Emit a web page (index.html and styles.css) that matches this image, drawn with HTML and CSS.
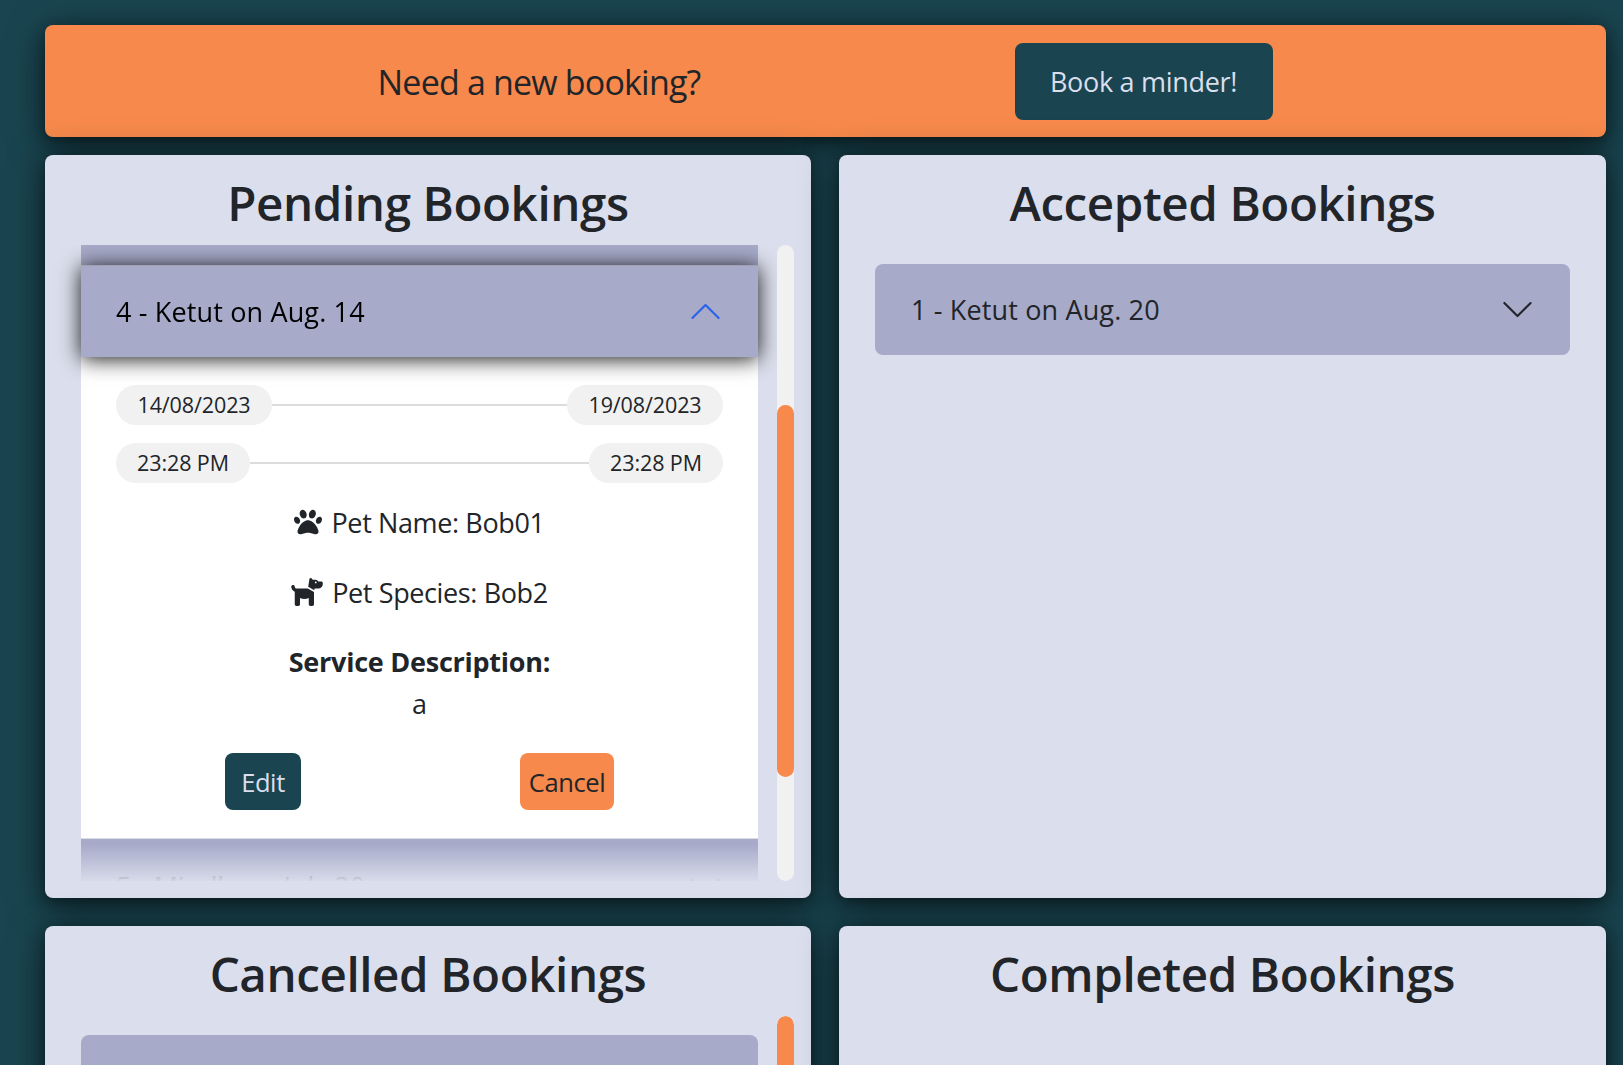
FILE: index.html
```html
<!DOCTYPE html>
<html lang="en">
<head>
<meta charset="utf-8">
<title>Bookings</title>
<link rel="stylesheet" href="styles.css">
</head>
<body>
<main class="page">
  <section class="banner">
    <div class="banner-half"><p class="banner-text">Need a new booking?</p></div>
    <div class="banner-half"><button class="btn-book"><span>Book a minder!</span></button></div>
  </section>
  <div class="grid">
    <section class="panel">
      <h2 class="title">Pending Bookings</h2>
      <div class="scroll">
        <div class="viewport">
          <div class="item-tail"></div>
          <div class="item-header open">
            <span class="item-label">4 - Ketut on Aug. 14</span>
            <svg class="chevron up" viewBox="0 0 16 16"><path d="M1.65 4.65a.5.5 0 0 1 .7 0L8 10.3l5.65-5.65a.5.5 0 0 1 .7.7l-6 6a.5.5 0 0 1-.7 0l-6-6a.5.5 0 0 1 0-.7z"/></svg>
          </div>
          <div class="item-body">
            <div class="range"><span class="pill date">14/08/2023</span><span class="line"></span><span class="pill date">19/08/2023</span></div>
            <div class="range"><span class="pill time">23:28 PM</span><span class="line"></span><span class="pill time">23:28 PM</span></div>
            <p class="fact"><svg class="icon-paw" viewBox="0 0 512 512"><path d="M226.500 92.900c14.300 42.900-.3 86.200-32.600 96.800s-70.100-15.600-84.400-58.500s.3-86.200 32.600-96.800s70.100 15.600 84.400 58.500zM100.400 198.600c18.900 32.400 14.300 70.100-10.200 84.100s-59.700-.9-78.500-33.300S-2.700 179.300 21.800 165.300s59.700 .9 78.500 33.300zM69.200 401.200C121.600 259.900 214.700 224 256 224s134.400 35.900 186.800 177.200c3.600 9.700 5.200 20.100 5.200 30.500v1.600c0 25.800-20.900 46.700-46.700 46.700c-11.500 0-22.900-1.400-34-4.200l-88-22c-15.300-3.800-31.300-3.800-46.600 0l-88 22c-11.100 2.800-22.500 4.200-34 4.200C84.900 480 64 459.100 64 433.300v-1.600c0-10.400 1.600-20.800 5.200-30.500zM421.800 282.700c-24.500-14-29.100-51.700-10.200-84.100s54-47.300 78.500-33.300s29.100 51.700 10.200 84.100s-54 47.300-78.500 33.300zM310.100 189.700c-32.300-10.600-46.900-53.900-32.600-96.800s52.100-69.100 84.400-58.500s46.900 53.900 32.600 96.800s-52.100 69.100-84.400 58.500z"/></svg><span>Pet Name: Bob01</span></p>
            <p class="fact"><svg class="icon-dog" viewBox="0 0 576 512"><path d="M309.600 158.500L332.700 19.800C334.600 8.400 344.500 0 356.100 0c7.500 0 14.500 3.500 19 9.500L392 32h52.100c12.700 0 24.900 5.100 33.900 14.100L496 64h56c13.300 0 24 10.700 24 24v24c0 44.200-35.800 80-80 80H464 448 426.700l-5.100 30.500-112-64zM416 256.100L416 480c0 17.700-14.300 32-32 32H352c-17.700 0-32-14.300-32-32V364.800c-24 12.300-51.200 19.200-80 19.200s-56-6.900-80-19.200V480c0 17.700-14.300 32-32 32H96c-17.700 0-32-14.300-32-32V249.800c-28.800-10.900-51.400-35.300-59.200-66.500L1 167.800c-4.300-17.100 6.100-34.500 23.300-38.800s34.500 6.100 38.800 23.300l3.900 15.500C70.500 182 83.300 192 98 192h30 16H303.800L416 256.100zM464 80a16 16 0 1 0 -32 0 16 16 0 1 0 32 0z"/></svg><span>Pet Species: Bob2</span></p>
            <p class="service"><strong>Service Description:</strong><br>a</p>
            <div class="actions"><button class="btn btn-edit">Edit</button><button class="btn btn-cancel">Cancel</button></div>
          </div>
          <div class="item-header next">
            <span class="item-label">5 - Mindly on July 30</span>
            <svg class="chevron" viewBox="0 0 16 16"><path d="M1.65 4.65a.5.5 0 0 1 .7 0L8 10.3l5.65-5.65a.5.5 0 0 1 .7.7l-6 6a.5.5 0 0 1-.7 0l-6-6a.5.5 0 0 1 0-.7z"/></svg>
          </div>
        </div>
        <div class="track"><div class="thumb mid"></div></div>
      </div>
    </section>
    <section class="panel">
      <h2 class="title">Accepted Bookings</h2>
      <div class="list">
        <div class="item-header rounded">
          <span class="item-label">1 - Ketut on Aug. 20</span>
          <svg class="chevron" viewBox="0 0 16 16"><path d="M1.65 4.65a.5.5 0 0 1 .7 0L8 10.3l5.65-5.65a.5.5 0 0 1 .7.7l-6 6a.5.5 0 0 1-.7 0l-6-6a.5.5 0 0 1 0-.7z"/></svg>
        </div>
      </div>
    </section>
    <section class="panel">
      <h2 class="title">Cancelled Bookings</h2>
      <div class="scroll">
        <div class="viewport top"><div class="item-header rounded"></div></div>
        <div class="track"><div class="thumb"></div></div>
      </div>
    </section>
    <section class="panel">
      <h2 class="title">Completed Bookings</h2>
    </section>
  </div>
</main>
</body>
</html>
```
FILE: styles.css
```css
* { box-sizing: border-box; }
html, body { height: 100%; }
body {
  margin: 0;
  overflow: hidden;
  background: #1a4550;
  color: #212529;
  font-family: "Open Sans", "Noto Sans", sans-serif;
  font-size: 27px;
}
p, h2 { margin: 0; }
button { font: inherit; border: 0; padding: 0; }
.page { height: 100%; overflow: hidden; padding: 25px 17px 0 45px; }
.banner, .panel {
  border-radius: 8px;
  box-shadow: 0 7px 36px rgba(0, 0, 0, .6), 0 4px 12px rgba(0, 0, 0, .3);
}
.banner {
  display: grid;
  grid-template-columns: 780px 1fr;
  align-items: center;
  height: 112px;
  margin-bottom: 18px;
  background: #f6894b;
}
.banner-half { display: flex; justify-content: center; }
.banner-half + .banner-half { padding-right: 144px; }
.banner-half:first-child { padding: 2px 0 0 208px; }
.banner-text { font-size: 34px; letter-spacing: -.82px; white-space: nowrap; }
.btn-book {
  width: 258px;
  height: 77px;
  border-radius: 8px;
  background: #1a4550;
  color: #dbdeec;
  letter-spacing: -.3px;
}
.grid {
  display: grid;
  grid-template-columns: 766px 767px;
  grid-auto-rows: 743px;
  gap: 28px;
}
.panel {
  display: flex;
  flex-direction: column;
  padding-top: 19px;
  background: #dbdeec;
}
.title {
  height: 71px;
  line-height: 58px;
  font-size: 47.5px;
  font-weight: 600;
  letter-spacing: -.4px;
  text-align: center;
  white-space: nowrap;
}
.scroll { display: flex; height: 636px; }
.viewport {
  width: 732px;
  height: 636px;
  padding: 0 19px 0 36px;
  overflow: hidden;
  -webkit-mask-image: linear-gradient(#000 600px, transparent 638px);
  mask-image: linear-gradient(#000 600px, transparent 638px);
}
.viewport.top { padding-top: 19px; }
.item-tail { height: 20px; background: #a7abc9; }
.item-header {
  display: flex;
  align-items: center;
  justify-content: space-between;
  height: 91px;
  padding: 0 35px 0 36px;
  background: #a7abc9;
}
.item-label { letter-spacing: .15px; }
.item-header.rounded { border-radius: 8px; }
.item-header.open {
  position: relative;
  height: 92px;
  padding: 0 35px;
  border-top: 1px solid #a0a2b4;
  color: #000;
  box-shadow: 0 2px 20px rgba(0, 0, 0, .9);
}
.item-header.next { padding: 3px 35px 0; }
.next .item-label { letter-spacing: -.12px; }
.chevron { width: 35px; height: 35px; fill: #212529; }
.chevron.up { transform: rotate(180deg); fill: #2b63e8; }
.item-body {
  height: 482px;
  padding: 28px 35px 0;
  background: #fff;
  border-bottom: 1px solid #d9dbe3;
  text-align: center;
}
.range { display: flex; align-items: center; height: 40px; margin-bottom: 18px; }
.pill {
  height: 40px;
  line-height: 39px;
  border-radius: 20px;
  background: #f1f1f1;
  font-size: 21.5px;
  letter-spacing: -.1px;
}
.pill.date { width: 156px; }
.pill.time { width: 134px; }
.line { flex: 1; height: 2px; background: #dcdcdc; }
.fact {
  display: flex;
  justify-content: center;
  align-items: center;
  height: 42px;
  margin-bottom: 28px;
  letter-spacing: -.38px;
}
.icon-paw { width: 28px; height: 28px; margin: 0 9px 1px 0; }
.icon-dog { width: 32px; height: 28px; margin: 0 9px 1px 0; }
.fact svg { fill: #212529; }
.service { line-height: 42px; letter-spacing: -.25px; }
.actions { display: flex; padding: 28px 0 0 109px; gap: 219px; }
.btn { height: 57px; border-radius: 8px; font-size: 25.5px; letter-spacing: -.4px; }
.btn-edit { width: 76px; background: #1a4550; color: #dbdeec; }
.btn-cancel { width: 94px; background: #f6894b; color: #212529; }
.track { width: 17px; height: 636px; border-radius: 9px; background: #f1f1f1; overflow: hidden; }
.thumb { height: 372px; border-radius: 9px; background: #f6894b; }
.thumb.mid { margin-top: 160px; }
.list { padding: 19px 36px 0; }
```
